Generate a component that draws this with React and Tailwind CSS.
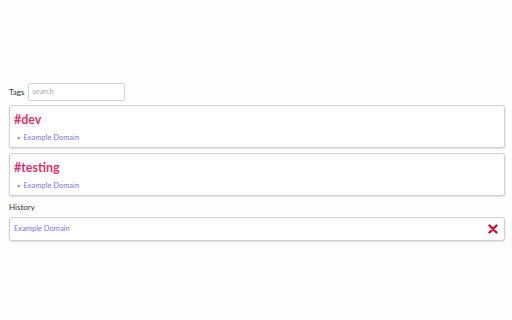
import React from "react";

function Card({ tag }) {
  return (
    <div className="h-[43px] rounded-[3px] border border-[#cfcfcf] bg-white shadow-[0_1px_2px_rgba(0,0,0,0.12)] px-[4px] pt-[6px]">
      <div className="text-[12.5px] leading-[16px] font-bold text-[#d8336d]">{tag}</div>
      <div className="flex items-center gap-[3px] pl-[3px] mt-[5px] text-[7.5px] leading-[10px]">
        <span className="text-[#888] text-[6px]">•</span>
        <span className="text-[#7a70e0]">Example Domain</span>
      </div>
    </div>
  );
}

export default function App() {
  return (
    <div className="w-[512px] h-[320px] bg-[#fdfdfd] pl-[9px] pr-[7px] pt-[83px] text-[#333]" style={{ fontFamily: "Lato, 'Open Sans', sans-serif" }}>
      <div className="flex items-center gap-[4px] h-[18px]">
        <span className="text-[8px] text-[#333]">Tags</span>
        <div className="w-[97px] h-[18px] rounded-[2px] border border-[#cfcfcf] bg-white flex items-center px-[3px] text-[7.5px] text-[#aaa]">search</div>
      </div>
      <div className="mt-[4px] flex flex-col gap-[5px]">
        <Card tag="#dev" />
        <Card tag="#testing" />
      </div>
      <div className="mt-[5px] text-[8px] leading-[12px] text-[#333]">History</div>
      <div className="mt-[4px] h-[24px] rounded-[3px] border border-[#cfcfcf] bg-white shadow-[0_1px_2px_rgba(0,0,0,0.12)] flex items-center justify-between pl-[4px] pr-[6px]">
        <span className="text-[7.5px] text-[#7a70e0]">Example Domain</span>
        <svg width="10" height="10" viewBox="0 0 10 10">
          <path d="M1.5 1.5 L8.5 8.5 M8.5 1.5 L1.5 8.5" stroke="#c8102e" strokeWidth="2.4" strokeLinecap="round" />
        </svg>
      </div>
    </div>
  );
}
